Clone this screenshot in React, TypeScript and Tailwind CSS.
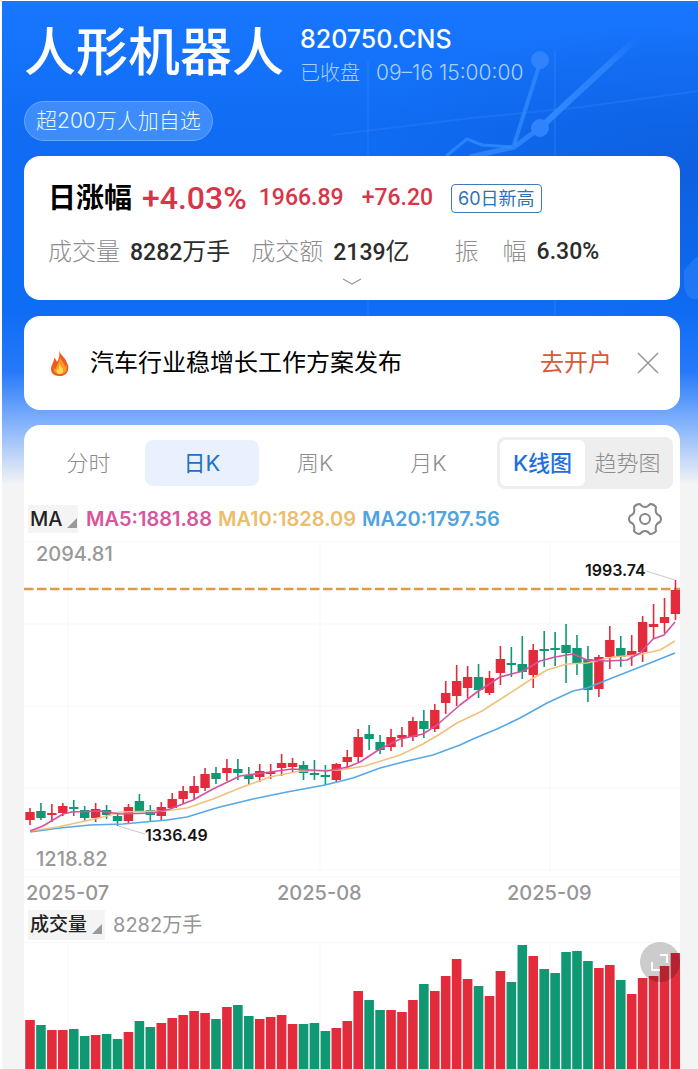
import { useState } from "react"

type Candle = [dir: "r" | "g", top: number, bottom: number, high: number, low: number, volume: number]

// Body top, body bottom, wick top, wick bottom and volume bar top, in chart units
const candles: Candle[] = [
  ["r", 812, 820, 808, 825, 1020], ["g", 811, 818, 803, 820, 1025], ["r", 813, 815, 804, 822, 1030],
  ["r", 806, 813, 803, 816, 1030], ["g", 807, 809, 800, 816, 1029], ["g", 810, 818, 806, 821, 1036],
  ["r", 809, 818, 803, 822, 1035], ["g", 810, 815, 805, 819, 1034], ["g", 816, 821, 813, 826, 1039],
  ["r", 807, 821, 804, 823, 1032], ["g", 801, 811, 794, 812, 1021], ["g", 810, 815, 805, 821, 1027],
  ["r", 807, 816, 802, 820, 1023], ["r", 799, 808, 793, 809, 1018], ["r", 791, 799, 786, 804, 1015],
  ["r", 786, 793, 776, 799, 1011], ["r", 774, 788, 768, 791, 1013], ["g", 773, 779, 767, 784, 1019],
  ["r", 768, 773, 759, 781, 1007], ["g", 769, 773, 759, 780, 1005], ["g", 775, 779, 767, 785, 1016],
  ["r", 771, 777, 764, 782, 1019], ["r", 772, 774, 764, 779, 1017], ["r", 763, 768, 754, 776, 1015],
  ["r", 763, 767, 758, 772, 1024], ["g", 765, 773, 761, 780, 1024], ["g", 773, 775, 760, 780, 1023],
  ["g", 775, 777, 765, 785, 1031], ["r", 764, 780, 763, 782, 1028], ["r", 757, 762, 750, 769, 1021],
  ["r", 737, 757, 729, 762, 991], ["g", 734, 739, 725, 750, 1000], ["g", 742, 750, 735, 754, 1010],
  ["r", 737, 747, 729, 751, 1010], ["r", 735, 738, 727, 747, 1012], ["r", 721, 737, 717, 741, 1000],
  ["g", 721, 729, 710, 738, 984], ["r", 710, 729, 704, 732, 991], ["r", 693, 703, 681, 714, 976],
  ["r", 681, 696, 665, 706, 959], ["r", 677, 688, 666, 698, 979], ["g", 677, 690, 664, 698, 986],
  ["r", 678, 693, 671, 695, 996], ["r", 659, 673, 646, 685, 971], ["g", 663, 665, 647, 677, 982],
  ["g", 664, 672, 636, 679, 945], ["r", 650, 675, 644, 688, 956], ["g", 649, 651, 631, 667, 969],
  ["g", 648, 650, 632, 666, 973], ["g", 645, 653, 624, 683, 952], ["g", 648, 663, 635, 675, 951],
  ["g", 659, 690, 646, 702, 961], ["r", 657, 689, 655, 697, 968], ["r", 640, 657, 626, 669, 965],
  ["g", 648, 657, 636, 667, 980], ["r", 651, 656, 635, 666, 994], ["r", 622, 652, 616, 662, 978],
  ["r", 624, 627, 604, 638, 976], ["r", 617, 623, 598, 633, 966], ["r", 590, 614, 580, 620, 953],
]

const averages = [
  {
    label: "MA20:1797.56",
    text: "text-[#4fa3df]",
    stroke: "#56a9e4",
    points:
      "6,832 36,828 66,825 99,824 121,822 143,820 163,817 189,809 196,807 229,799 263,792 301,785 329,778 356,768 383,761 409,755 436,745 449,739 473,729 496,718 523,703 549,691 563,688 583,680 616,667 651,653",
  },
  {
    label: "MA10:1828.09",
    text: "text-[#ecbd6c]",
    stroke: "#f0c27c",
    points:
      "6,831 34,827 61,821 83,816 96,812 141,811 163,808 189,799 216,788 246,777 276,771 316,770 341,766 376,755 399,744 416,734 433,723 458,711 483,695 506,680 523,670 543,664 563,663 589,657 613,655 636,650 651,641",
  },
  {
    label: "MA5:1881.88",
    text: "text-[#d9559c]",
    stroke: "#d4539f",
    points:
      "6,831 19,826 39,814 48,812 76,811 96,814 129,813 146,809 169,800 189,789 216,776 246,772 268,769 303,771 324,767 336,762 356,749 376,739 399,734 413,725 436,705 453,692 476,677 499,671 516,661 531,657 549,654 563,660 583,661 603,660 616,653 629,639 640,635 651,622",
  },
]

const periods = ["分时", "日K", "周K", "月K"]
const months = [
  { label: "2025-07", width: "w-[251px]" },
  { label: "2025-08", width: "w-[230px]" },
  { label: "2025-09", width: "flex-1" },
]

const color = { r: "#e32b3c", g: "#109873" }
const barX = (index: number) => 6 + index * 10.94

const HeaderArt = () => (
  <svg className="absolute inset-x-0 top-0 w-full" viewBox="0 0 696 320" fill="none" aria-hidden="true">
    <defs>
      <linearGradient id="ray" gradientUnits="userSpaceOnUse" x1="538" y1="127" x2="636" y2="36">
        <stop offset="0" stopColor="#3289ff" />
        <stop offset="0.7" stopColor="#3289ff" stopOpacity="0.7" />
        <stop offset="1" stopColor="#3289ff" stopOpacity="0" />
      </linearGradient>
      <radialGradient id="shade" cx="1" cy="0.5" r="0.5">
        <stop offset="0" stopColor="#0d55cf" stopOpacity="0.55" />
        <stop offset="1" stopColor="#0d55cf" stopOpacity="0" />
      </radialGradient>
    </defs>
    <rect x="0" y="20" width="696" height="300" fill="url(#shade)" />
    <g stroke="#4a98ff" strokeOpacity="0.2" strokeWidth="2">
      <path d="M366 60V320M553 50V320" />
      <path d="M330 134L470 117L580 106L696 90" />
    </g>
    <g stroke="#3289ff" strokeOpacity="0.8" strokeLinejoin="round">
      <path d="M444 155L465 138L480 144L510 146" strokeWidth="3" />
      <path d="M512 144L538 62" strokeWidth="4" />
      <path d="M468 156L512 146L538 127" strokeWidth="5" />
    </g>
    <path d="M538 127L636 36" stroke="url(#ray)" strokeWidth="6" />
    <circle cx="538" cy="59" r="9" fill="#3083fb" />
    <circle cx="538" cy="127" r="9" fill="#3083fb" />
    <path d="M682 270Q692 256 696 256V298Q682 300 682 280Z" fill="#4193ff" fillOpacity="0.35" />
  </svg>
)

const Flame = () => (
  <svg className="w-5 h-7 shrink-0" viewBox="0 0 20 28" aria-hidden="true">
    <path d="M9 1C10 6 16 9 17 14C18 16 19 18 18 21C17 25 14 27 9 27C4 27 1 24 1 20C1 16 4 14 4 9C6 10 6 11 7 13C9 10 10 6 9 1Z" fill="#ee5a24" />
    <path d="M10 8C11 12 15 14 15 18C16 17 16 16 16 15C18 20 16 25 10 25C5 25 3 22 4 18C5 19 5 20 6 20C6 16 10 13 10 8Z" fill="#fb9a26" />
    <path d="M10 15C10 18 14 19 13 22C13 24 12 25 10 25C7 25 6 23 7 20L9 21C8 19 9 17 10 15Z" fill="#ffd950" />
  </svg>
)

const SettingsIcon = () => (
  <svg className="w-9 h-9" viewBox="0 0 36 36" fill="none" stroke="#858585" strokeWidth="2" strokeLinejoin="round" aria-hidden="true">
    <path d="M13 3Q15 6 18 6Q21 6 23 3Q27 3 29 6Q28 11 30 13Q31 14 33 15Q35 18 33 21Q31 22 30 23Q28 25 29 30Q27 33 23 33Q21 30 18 30Q15 30 13 33Q9 33 7 30Q8 25 6 23Q5 22 3 21Q1 18 3 15Q5 14 6 13Q8 11 7 6Q9 3 13 3Z" />
    <circle cx="18" cy="18" r="5" />
  </svg>
)

const Corner = () => (
  <svg className="mt-2 w-3 h-3 shrink-0" viewBox="0 0 12 12" aria-hidden="true">
    <path d="M11 1V11H1Z" fill="#9a9a9a" />
  </svg>
)

const PriceChart = () => (
  <svg className="block w-full" viewBox="0 540 656 338" role="img" aria-label="日K线图">
    <g stroke="#f6f7f7">
      <path d="M0 542H656M0 624H656M0 706H656M0 788H656M0 870H656M0 877H656" />
      <path d="M44 542V870M296 542V870M526 542V870" />
    </g>
    <path d="M0 589H656" stroke="#dd9a4c" strokeWidth="2.5" strokeDasharray="9.5 3.5" />
    {candles.map(([dir, top, bottom, high, low], index) => (
      <g key={index} fill={color[dir]}>
        <rect x={barX(index) - 0.8} y={high} width="1.6" height={low - high} />
        <rect x={barX(index) - 4.7} y={top} width="9.4" height={bottom - top} />
      </g>
    ))}
    {averages.map((line) => (
      <polyline key={line.label} points={line.points} fill="none" stroke={line.stroke} strokeWidth="1.6" strokeLinejoin="round" />
    ))}
    <path d="M94 826L121 834M622 571L651 580" stroke="#c9c9c9" />
    <g fontFamily="Inter, sans-serif">
      <g fontSize="16" fontWeight="600" fill="#151515">
        <text x="561" y="576">1993.74</text>
        <text x="121" y="841">1336.49</text>
      </g>
      <g fontSize="20" fontWeight="500" fill="#999">
        <text x="12" y="561">2094.81</text>
        <text x="12" y="866">1218.82</text>
      </g>
    </g>
  </svg>
)

const VolumeChart = () => (
  <svg className="block w-full" viewBox="0 942 656 127" role="img" aria-label="成交量">
    <path d="M0 942.5H656M44 942V1069M296 942V1069M526 942V1069" stroke="#f6f7f7" />
    {candles.map(([dir, , , , , top], index) => (
      <rect key={index} x={barX(index) - 4.8} y={top} width="9.6" height={1069 - top} fill={color[dir]} />
    ))}
  </svg>
)

const App = () => {
  const [period, setPeriod] = useState("日K")
  const [view, setView] = useState("K线图")
  const [showNotice, setShowNotice] = useState(true)

  return (
    <div className="border-l-2 border-t border-white bg-white font-['Inter','Noto_Sans_CJK_SC',sans-serif]">
      <div className="relative bg-[linear-gradient(to_bottom,#1976ff_0px,#0f6cf3_130px,#0f6cf4_310px,#2679fa_370px,#7fb0fc_420px,#f4f4f4_484px)] pl-[22px] pr-[18px]">
        <HeaderArt />
        <div className="relative">
          <header className="pt-5 text-white">
            <div className="flex gap-4">
              <h1 className="text-[52px] leading-[64px] font-medium whitespace-nowrap">人形机器人</h1>
              <div className="pt-1">
                <p className="text-[25px] leading-7 font-medium">820750.CNS</p>
                <p className="mt-1 flex gap-4 text-xl leading-8 font-light text-[#a9d0ff] whitespace-nowrap">
                  <span>已收盘</span>
                  <span className="text-[21px]">09–16 15:00:00</span>
                </p>
              </div>
            </div>
            <button className="mt-3 block h-10 px-[11px] rounded-full border border-[#69a6ff] bg-[#3e8bfb] text-[21px] leading-9 font-light text-[#e4fbff]">
              超200万人加自选
            </button>
          </header>

          <section className="mt-[15px] h-36 rounded-2xl bg-white px-6 pt-5">
            <div className="flex items-center h-11 whitespace-nowrap">
              <h2 className="text-[28px] font-bold text-black">日涨幅</h2>
              <span className="ml-[10px] text-[32px] font-medium font-['Roboto'] text-[#d93548]">+4.03%</span>
              <span className="ml-3 text-[23px] font-medium font-['Roboto'] text-[#d93548]">1966.89</span>
              <span className="ml-[18px] text-[23px] font-medium font-['Roboto'] text-[#d93548]">+76.20</span>
              <span className="ml-[18px] h-[29px] px-[6px] rounded border border-[#3f7cb5] text-lg leading-7 text-[#2f72b8]">60日新高</span>
            </div>
            <dl className="mt-3 flex text-2xl leading-10 whitespace-nowrap text-[#2c2c2c]">
              <dt className="font-light text-[#8d8d8d]">成交量</dt>
              <dd className="ml-[10px] font-['Roboto','Noto_Sans_CJK_SC']"><span className="text-[23px] font-medium">8282</span>万手</dd>
              <dt className="ml-[21px] font-light text-[#8d8d8d]">成交额</dt>
              <dd className="ml-[10px] font-['Roboto','Noto_Sans_CJK_SC']"><span className="text-[23px] font-medium">2139</span>亿</dd>
              <dt className="ml-[45px] flex gap-6 font-light text-[#8d8d8d]"><span>振</span><span>幅</span></dt>
              <dd className="ml-[10px] text-[23px] font-medium font-['Roboto']">6.30%</dd>
            </dl>
            <button className="block mx-auto mt-1" aria-label="展开">
              <svg className="w-5 h-3" viewBox="0 0 20 12" fill="none" stroke="#999" strokeWidth="1.4" aria-hidden="true">
                <path d="M1 2L10 7L19 2" />
              </svg>
            </button>
          </section>

          {showNotice && (
            <section className="mt-4 h-[94px] rounded-2xl bg-white pl-[26px] pr-5 flex items-center">
              <Flame />
              <p className="ml-5 text-2xl text-black whitespace-nowrap">汽车行业稳增长工作方案发布</p>
              <a href="#open" className="ml-auto text-2xl text-[#d65a37] whitespace-nowrap">去开户</a>
              <button className="ml-6" aria-label="关闭" onClick={() => setShowNotice(false)}>
                <svg className="w-6 h-6" viewBox="0 0 24 24" fill="none" stroke="#999" strokeWidth="1.6" aria-hidden="true">
                  <path d="M2 2L22 22M22 2L2 22" />
                </svg>
              </button>
            </section>
          )}

          <section className="mt-[15px] rounded-t-2xl bg-white overflow-hidden">
            <div className="flex items-center h-[76px] pl-2 pr-[7px]">
              <nav className="flex flex-1">
                {periods.map((item) => (
                  <button
                    key={item}
                    onClick={() => setPeriod(item)}
                    className={`flex-1 h-[46px] rounded-lg text-[22px] ${
                      period === item ? "bg-[#e8f1fd] text-[#1f70cf]" : "font-light text-[#8c8c8c]"
                    }`}
                  >
                    {item}
                  </button>
                ))}
              </nav>
              <div className="ml-3 flex h-[52px] rounded-lg bg-[#eee] p-[3px]">
                {["K线图", "趋势图"].map((item) => (
                  <button
                    key={item}
                    onClick={() => setView(item)}
                    className={`w-[85px] rounded-md text-[22px] whitespace-nowrap ${
                      view === item ? "bg-white font-medium text-[#1d70df]" : "font-light text-[#8c8c8c]"
                    }`}
                  >
                    {item}
                  </button>
                ))}
              </div>
            </div>

            <div className="flex items-center h-9 mb-[3px] pl-1 pr-[17px] text-[20px] font-semibold whitespace-nowrap">
              <button className="flex items-center h-7 w-[50px] px-[2px] gap-1 bg-[#f4f4f4] text-[#222] font-medium leading-7">
                MA
                <Corner />
              </button>
              <div className="ml-2 flex flex-1 flex-row-reverse justify-end gap-[6px]">
                {averages.map((line) => (
                  <span key={line.label} className={line.text}>{line.label}</span>
                ))}
              </div>
              <button aria-label="设置">
                <SettingsIcon />
              </button>
            </div>

            <PriceChart />

            <div className="flex h-[30px] pl-[2px] text-[20px] leading-[30px] font-medium text-[#969696]">
              {months.map((month) => (
                <span key={month.label} className={month.width}>{month.label}</span>
              ))}
            </div>
            <div className="flex items-center h-[34px] pl-1">
              <button className="flex items-center h-[30px] px-[2px] gap-1 bg-[#f4f4f4] text-[19px] leading-[30px] font-medium text-[#222]">
                成交量
                <Corner />
              </button>
              <span className="ml-2 text-[20px] text-[#969696]">8282万手</span>
            </div>

            <div className="relative">
              <VolumeChart />
              <button className="absolute top-0 right-0 w-10 h-10 rounded-full bg-black/20" aria-label="全屏">
                <svg className="w-10 h-10" viewBox="0 0 40 40" fill="none" stroke="#fff" strokeWidth="2" aria-hidden="true">
                  <path d="M20 13H27V21M12 20V28H20" />
                </svg>
              </button>
            </div>
          </section>
        </div>
      </div>
    </div>
  )
}

export default App
